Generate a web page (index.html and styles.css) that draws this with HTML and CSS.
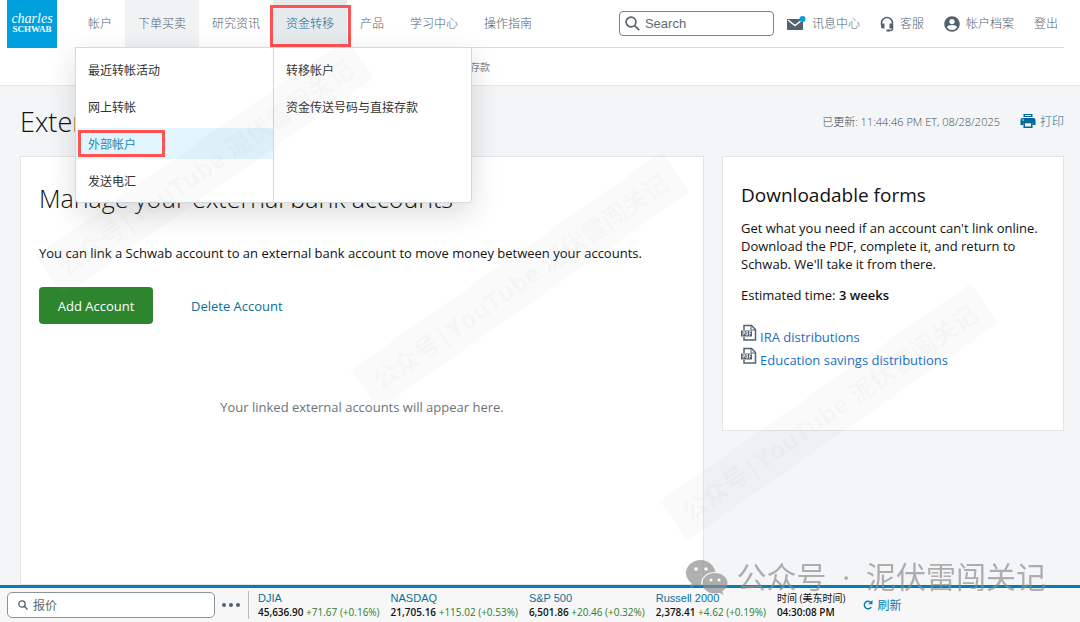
FILE: index.html
```html
<!DOCTYPE html>
<html lang="zh-CN">
<head>
  <meta charset="UTF-8">
  <title>External Accounts</title>
  <link rel="stylesheet" href="styles.css">
</head>
<body>

<header>
  <div class="topbar">
    <a class="logo" href="#"><span class="logo-script">charles</span><span class="logo-caps">SCHWAB</span></a>
    <div class="topbar-inner">
      <nav class="main-nav">
        <a href="#">帐户</a>
        <a href="#" class="shaded">下单买卖</a>
        <a href="#">研究资讯</a>
        <a href="#" class="active">资金转移</a>
        <a href="#">产品</a>
        <a href="#">学习中心</a>
        <a href="#">操作指南</a>
      </nav>
      <label class="search">
        <svg width="15" height="15" viewBox="0 0 15 15" fill="none" stroke="#53626f" stroke-width="1.7"><circle cx="6" cy="6" r="4.9"/><path d="M9.6 9.6l4.6 4.6"/></svg>
        <input type="text" placeholder="Search" aria-label="Search">
      </label>
      <nav class="tools">
        <a href="#">
          <svg width="20" height="18" viewBox="0 0 20 18"><path fill="#53626f" d="M1 4h16v11H1z"/><path d="M2 5l7 5.500 7-5.500" fill="none" stroke="#fff" stroke-width="1.500"/><circle cx="16.500" cy="4" r="3" fill="#00a0df"/></svg>
          讯息中心
        </a>
        <a href="#">
          <svg width="14" height="16" viewBox="0 0 14 16"><path d="M1.500 9V7a5.500 5.500 0 0 1 11 0v5.500q0 2-2 2H8" fill="none" stroke="#53626f" stroke-width="1.500"/><path fill="#53626f" d="M1 7.500h3.500v5H3q-2 0-2-2zM13 7.500H9.500v5H11q2 0 2-2zM6.500 13.500h3v2h-3z"/></svg>
          客服
        </a>
        <a href="#">
          <svg width="16" height="16" viewBox="0 0 16 16"><circle cx="8" cy="8" r="7.800" fill="#53626f"/><circle cx="8" cy="5.500" r="2.600" fill="#fff"/><path d="M3 11.600q0-2.600 5-2.600t5 2.600q-2 2.500-5 2.500t-5-2.500z" fill="#fff"/></svg>
          帐户档案
        </a>
        <a href="#">登出</a>
      </nav>

      <div class="dropdown">
        <ul>
          <li><a href="#">最近转帐活动</a></li>
          <li><a href="#">网上转帐</a></li>
          <li><a href="#" class="current">外部帐户</a></li>
          <li><a href="#">发送电汇</a></li>
        </ul>
        <ul>
          <li><a href="#">转移帐户</a></li>
          <li><a href="#">资金传送号码与直接存款</a></li>
        </ul>
      </div>
    </div>
  </div>
  <div class="subnav"><a href="#">存款</a></div>
</header>

<main>
  <div class="page-head">
    <h1>External Accounts</h1>
    <div class="page-meta">
      <span>已更新: 11:44:46 PM ET, 08/28/2025</span>
      <a class="print" href="#">
        <svg width="16" height="16" viewBox="0 0 16 16"><path fill="#00699b" d="M3.500 1h9v3h-9zM2.500 5h11q2 0 2 2v5h-3V9.500h-9V12h-3V7q0-2 2-2z"/><path fill="none" stroke="#00699b" stroke-width="1.500" d="M4.200 9.500h7.600v4.700H4.200z"/><path stroke="#f3f5f7" stroke-width="1" d="M5 2.500h6"/><circle cx="3" cy="7" r=".8" fill="#fff"/></svg>
        打印
      </a>
    </div>
  </div>

  <div class="columns">
    <section class="card accounts">
      <h2>Manage your external bank accounts</h2>
      <p>You can link a Schwab account to an external bank account to move money between your accounts.</p>
      <div class="actions">
        <button class="add">Add Account</button>
        <a href="#">Delete Account</a>
      </div>
      <p class="empty">Your linked external accounts will appear here.</p>
    </section>

    <aside class="card forms">
      <h3>Downloadable forms</h3>
      <p>Get what you need if an account can't link online. Download the PDF, complete it, and return to Schwab. We'll take it from there.</p>
      <p>Estimated time: <b>3 weeks</b></p>
      <ul>
        <li>
          <svg width="16" height="18" viewBox="0 0 16 18"><path d="M3 6V1.500h7.500l4 4V16H3v-3" fill="none" stroke="#53626f" stroke-width="1.500"/><path d="M10 1.500V6h4.500" fill="none" stroke="#53626f"/><path fill="#53626f" d="M0 6.500h11v6H0z"/><path d="M2 11.500v-4h1.500v2H2M5 7.500v3.500h1.500v-3.500zM8.500 11.500v-4h2M8.500 9.500h1.500" fill="none" stroke="#fff" stroke-width=".7"/></svg>
          <a href="#">IRA distributions</a>
        </li>
        <li>
          <svg width="16" height="18" viewBox="0 0 16 18"><path d="M3 6V1.500h7.500l4 4V16H3v-3" fill="none" stroke="#53626f" stroke-width="1.500"/><path d="M10 1.500V6h4.500" fill="none" stroke="#53626f"/><path fill="#53626f" d="M0 6.500h11v6H0z"/><path d="M2 11.500v-4h1.500v2H2M5 7.500v3.500h1.500v-3.500zM8.500 11.500v-4h2M8.500 9.500h1.500" fill="none" stroke="#fff" stroke-width=".7"/></svg>
          <a href="#">Education savings distributions</a>
        </li>
      </ul>
    </aside>
  </div>
</main>

<footer class="ticker">
  <label class="quote">
    <svg width="10" height="10" viewBox="0 0 10 10" fill="none" stroke="#53626f" stroke-width="1.300"><circle cx="4" cy="4" r="3.200"/><path d="M6.300 6.300l3.200 3.200"/></svg>
    <input type="text" placeholder="报价" aria-label="报价">
  </label>
  <button class="more" aria-label="更多"><i></i><i></i><i></i></button>
  <div class="indexes">
    <div><a href="#">DJIA</a><p><b>45,636.90</b> <span>+71.67 (+0.16%)</span></p></div>
    <div><a href="#">NASDAQ</a><p><b>21,705.16</b> <span>+115.02 (+0.53%)</span></p></div>
    <div><a href="#">S&amp;P 500</a><p><b>6,501.86</b> <span>+20.46 (+0.32%)</span></p></div>
    <div><a href="#">Russell 2000</a><p><b>2,378.41</b> <span>+4.62 (+0.19%)</span></p></div>
    <div class="time">时间 (美东时间)<p><b>04:30:08 PM</b></p></div>
  </div>
  <button class="refresh">
    <svg width="10" height="10" viewBox="0 0 10 10"><path d="M8.200 7A3.700 3.700 0 1 1 7.800 2.600" fill="none" stroke="#0a7cb0" stroke-width="1.500"/><path d="M9.500 0v4.300H5.300z" fill="#0a7cb0"/></svg>
    刷新
  </button>
</footer>

<!-- watermarks -->
<div class="marks">
  <span class="strip strip-1">公众号|YouTube 泥伏雷闯关记</span>
  <span class="strip strip-2">公众号|YouTube 泥伏雷闯关记</span>
  <span class="strip strip-3">公众号|YouTube 泥伏雷闯关记</span>
  <div class="wechat">
    <svg width="42" height="35" viewBox="0 0 42 35"><path fill="#8f8f8f" d="M15 0C6.500 0 0 5.700 0 13c0 4.200 2.200 7.800 5.600 10.200L4 28l5.300-2.700q2.700.9 6.200.8C13.500 18 20 11.500 29.500 12 28 5 22 0 15 0z"/><path fill="#8f8f8f" d="M29 13c-7.200 0-12.500 4.500-12.500 10.200S21.800 33.400 29 33.400q2.200 0 4.300-.7L37.500 35l-1.200-4c3.300-2 5.200-4.700 5.200-7.800C41.500 17.500 36 13 29 13z"/><g fill="#fff"><circle cx="10" cy="9" r="1.800"/><circle cx="20" cy="9" r="1.800"/><circle cx="25" cy="20" r="1.500"/><circle cx="33" cy="20" r="1.500"/></g></svg>
    <span>公众号<span class="dot"> · </span>泥伏雷闯关记</span>
  </div>
</div>

</body>
</html>
```
FILE: styles.css
```css
*, *::after {
  box-sizing: border-box;
}

body {
  margin: 0;
  min-height: 100vh;
  display: flex;
  flex-direction: column;
  font-family: "Open Sans", "Noto Sans CJK SC", sans-serif;
  font-size: 13px;
  color: #111;
  background-color: #f3f5f7;
}

a {
  color: #0a7099;
  text-decoration: none;
}

h1, h2, h3, p, ul {
  margin: 0;
  padding: 0;
}

h1, h2 {
  font-weight: 300;
}

ul {
  list-style: none;
}

svg {
  flex: none;
}

button, input {
  font-family: inherit;
  border: none;
  background: none;
  padding: 0;
}

header {
  background-color: #fff;
  border-bottom: 1px solid #e5e8ea;
}

.topbar {
  display: flex;
  padding: 0 16px 0 7px;
}

.logo {
  width: 50px;
  height: 48px;
  margin-right: 18px;
  background-color: #00a0df;
  color: #fff;
  font-family: "Liberation Serif", serif;
  text-align: center;
  display: flex;
  flex-direction: column;
  justify-content: center;
}

.logo-script {
  font-size: 14px;
  line-height: 11px;
  font-style: italic;
}

.logo-caps {
  font-size: 9px;
  line-height: 11px;
  font-weight: bold;
}

.topbar-inner {
  position: relative;
  flex: 1;
  display: flex;
  align-items: center;
  height: 48px;
  border-bottom: 1px solid #d9dcde;
}

.main-nav {
  display: flex;
  align-self: stretch;
}

.main-nav a {
  padding: 0 13px;
  font-size: 12px;
  font-weight: 300;
  line-height: 47px;
  color: #53626f;
}

.main-nav .shaded {
  background-color: #f0f2f4;
}

.main-nav .active {
  position: relative;
  color: #0a7099;
  background-color: #e6eaed;
  box-shadow: inset 0 -3px #3c8ab0;
}

.main-nav .active::after,
.dropdown .current::after {
  content: "";
  position: absolute;
  inset: 5px -4px 0 -3px;
  border: 3px solid #ff5252;
}

.search {
  display: flex;
  align-items: center;
  gap: 5px;
  width: 155px;
  height: 25px;
  margin-left: auto;
  padding: 0 5px;
  border: 1px solid #7d8388;
  border-radius: 4px;
}

.search input {
  width: 100%;
  font: 13px "Liberation Sans", Arial, sans-serif;
}

input::placeholder {
  color: #5e6972;
  opacity: 1;
}

.tools {
  display: flex;
  gap: 20px;
  margin: 0 6px 0 12px;
}

.tools a {
  display: flex;
  align-items: center;
  gap: 6px;
  font-size: 12px;
  font-weight: 300;
  line-height: 16px;
  color: #53626f;
}

.dropdown {
  position: absolute;
  top: 47px;
  left: 0;
  z-index: 2;
  width: 397px;
  display: flex;
  background-color: #fff;
  border: 1px solid #d3dade;
  border-radius: 0 0 4px 4px;
  box-shadow: 0 10px 30px rgba(0, 0, 0, 0.14);
}

.dropdown ul {
  display: flex;
  flex-direction: column;
  gap: 6px;
  flex: 1;
  padding: 6px 0;
}

.dropdown ul + ul {
  border-left: 1px solid #d3dade;
}

.dropdown a {
  position: relative;
  display: block;
  padding: 2px 12px 0;
  font-size: 12px;
  line-height: 29px;
  color: #333;
}

.dropdown .current {
  color: #2a85ab;
  background-color: #e1f5fe;
}

.dropdown .current::after {
  inset: 2px auto 2px 2px;
  width: 87px;
}

.subnav {
  height: 37px;
  padding-left: 470px;
  line-height: 37px;
}

.subnav a {
  font-size: 10px;
  color: #7b858e;
}

main {
  flex: 1;
  display: flex;
  flex-direction: column;
  padding: 0 16px 37px 20px;
}

.page-head {
  display: flex;
  justify-content: space-between;
  align-items: center;
  height: 70px;
}

h1 {
  font-size: 27px;
}

.page-meta {
  display: flex;
  align-items: center;
  gap: 20px;
  font-size: 11px;
  font-weight: 300;
  color: #3f4c57;
}

.print {
  display: flex;
  align-items: center;
  gap: 4px;
  font-size: 12px;
}

.columns {
  flex: 1;
  display: grid;
  grid-template-columns: 2fr 1fr;
  gap: 18px;
}

.card {
  background-color: #fff;
  border: 1px solid #e3e5e7;
  padding: 20px 18px;
}

.accounts h2 {
  font-size: 25px;
  line-height: 42px;
  margin-bottom: 25px;
}

.actions {
  display: flex;
  align-items: center;
  gap: 38px;
  margin: 25px 0 74px;
}

.add {
  width: 114px;
  height: 37px;
  font-size: 13px;
  color: #fff;
  background-color: #2d862d;
  border-radius: 4px;
}

.empty {
  text-align: center;
  color: #68747e;
}

.forms {
  align-self: start;
  min-height: 275px;
}

.forms h3 {
  font-size: 19px;
  font-weight: 400;
  line-height: 36px;
  margin-bottom: 6px;
}

.forms p {
  line-height: 18px;
  margin-bottom: 13px;
}

.forms b, .ticker b {
  font-weight: 600;
}

.forms ul {
  margin-top: 20px;
}

.forms li {
  display: flex;
  gap: 3px;
  height: 23px;
}

.forms li a {
  line-height: 27px;
  color: #1a6fc9;
}

.ticker {
  position: fixed;
  left: 0;
  right: 0;
  bottom: 0;
  display: flex;
  align-items: center;
  height: 37px;
  padding-left: 7px;
  background-color: #f7f7f7;
  border-top: 3px solid #087db3;
}

.quote {
  display: flex;
  align-items: center;
  gap: 5px;
  width: 208px;
  height: 26px;
  padding-left: 10px;
  background-color: #fff;
  border: 1px solid #8a949c;
  border-radius: 5px;
}

.quote input {
  width: 100%;
  font-size: 12px;
}

.more {
  display: flex;
  gap: 3px;
  padding: 0 8px 0 7px;
}

.more i {
  width: 4px;
  height: 4px;
  border-radius: 50%;
  background-color: #53626f;
}

.indexes {
  display: flex;
  gap: 11px;
  padding-left: 9px;
  border-left: 1px solid #b5bcc2;
  font-size: 10px;
  line-height: 14px;
  white-space: nowrap;
}

.indexes a {
  font: 11px/14px "Liberation Sans", Arial, sans-serif;
  display: block;
}

.indexes span {
  color: #2d7d2d;
}

.refresh {
  display: flex;
  align-items: center;
  gap: 4px;
  margin-left: 18px;
  font-size: 12px;
  color: #0a7cb0;
}

.marks {
  position: fixed;
  inset: 0;
  z-index: 3;
  overflow: hidden;
  pointer-events: none;
}

.strip {
  position: absolute;
  width: 380px;
  height: 48px;
  font-size: 25px;
  font-weight: bold;
  line-height: 48px;
  text-align: center;
  white-space: nowrap;
  color: rgba(0, 0, 0, 0.02);
  background-color: rgba(160, 160, 160, 0.05);
  transform: rotate(-35deg);
}

.strip-1 {
  left: 15px;
  top: 143px;
}

.strip-2 {
  left: 330px;
  top: 257px;
}

.strip-3 {
  left: 639px;
  top: 388px;
}

.wechat {
  position: absolute;
  right: 34px;
  bottom: 25px;
  display: flex;
  align-items: center;
  gap: 9px;
  font-size: 30px;
  line-height: 40px;
  color: #8f8f8f;
  opacity: 0.7;
}

.dot {
  padding: 0 8px;
}
```
